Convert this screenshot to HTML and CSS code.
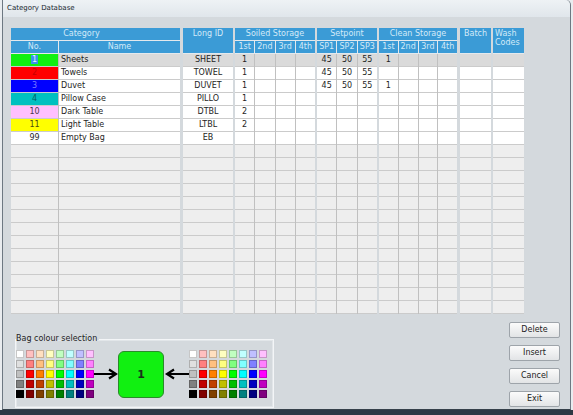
FILE: index.html
```html
<!DOCTYPE html>
<html>
<head>
<meta charset="utf-8">
<link rel="stylesheet" href="styles.css">
</head>
<body>
<div class="window">
  <div class="titlebar">Category Database</div>
  <div class="content">
    <div class="grid">
      <div class="grp w-cat">
        <div class="gh off">Category</div>
        <div class="shr"><div class="sh no">No.</div><div class="sh">Name</div></div>
        <div class="body">
          <div class="col no c">
            <div class="cell sw1"><span class="sel">1</span></div>
            <div class="cell sw2">2</div>
            <div class="cell sw3">3</div>
            <div class="cell sw4">4</div>
            <div class="cell sw10">10</div>
            <div class="cell sw11">11</div>
            <div class="cell sw99">99</div>
            <div class="fill"></div>
          </div>
          <div class="col l">
            <div class="cell">Sheets</div>
            <div class="cell">Towels</div>
            <div class="cell">Duvet</div>
            <div class="cell">Pillow Case</div>
            <div class="cell">Dark Table</div>
            <div class="cell">Light Table</div>
            <div class="cell">Empty Bag</div>
            <div class="fill"></div>
          </div>
        </div>
      </div>

      <div class="grp w-id">
        <div class="gh tall">Long ID</div>
        <div class="body">
          <div class="col c">
            <div class="cell">SHEET</div>
            <div class="cell">TOWEL</div>
            <div class="cell">DUVET</div>
            <div class="cell">PILLO</div>
            <div class="cell">DTBL</div>
            <div class="cell">LTBL</div>
            <div class="cell">EB</div>
            <div class="fill"></div>
          </div>
        </div>
      </div>

      <div class="grp w-soil">
        <div class="gh">Soiled Storage</div>
        <div class="shr"><div class="sh">1st</div><div class="sh">2nd</div><div class="sh">3rd</div><div class="sh">4th</div></div>
        <div class="body">
          <div class="col c">
            <div class="cell">1</div><div class="cell">1</div><div class="cell">1</div><div class="cell">1</div><div class="cell">2</div><div class="cell">2</div><div class="cell"></div>
            <div class="fill"></div>
          </div>
          <div class="col c">
            <div class="cell"></div><div class="cell"></div><div class="cell"></div><div class="cell"></div><div class="cell"></div><div class="cell"></div><div class="cell"></div>
            <div class="fill"></div>
          </div>
          <div class="col c">
            <div class="cell"></div><div class="cell"></div><div class="cell"></div><div class="cell"></div><div class="cell"></div><div class="cell"></div><div class="cell"></div>
            <div class="fill"></div>
          </div>
          <div class="col c">
            <div class="cell"></div><div class="cell"></div><div class="cell"></div><div class="cell"></div><div class="cell"></div><div class="cell"></div><div class="cell"></div>
            <div class="fill"></div>
          </div>
        </div>
      </div>

      <div class="grp w-sp">
        <div class="gh">Setpoint</div>
        <div class="shr"><div class="sh">SP1</div><div class="sh">SP2</div><div class="sh">SP3</div></div>
        <div class="body">
          <div class="col c">
            <div class="cell">45</div><div class="cell">45</div><div class="cell">45</div><div class="cell"></div><div class="cell"></div><div class="cell"></div><div class="cell"></div>
            <div class="fill"></div>
          </div>
          <div class="col c">
            <div class="cell">50</div><div class="cell">50</div><div class="cell">50</div><div class="cell"></div><div class="cell"></div><div class="cell"></div><div class="cell"></div>
            <div class="fill"></div>
          </div>
          <div class="col c">
            <div class="cell">55</div><div class="cell">55</div><div class="cell">55</div><div class="cell"></div><div class="cell"></div><div class="cell"></div><div class="cell"></div>
            <div class="fill"></div>
          </div>
        </div>
      </div>

      <div class="grp w-cl">
        <div class="gh">Clean Storage</div>
        <div class="shr"><div class="sh">1st</div><div class="sh">2nd</div><div class="sh">3rd</div><div class="sh">4th</div></div>
        <div class="body">
          <div class="col c">
            <div class="cell">1</div><div class="cell"></div><div class="cell">1</div><div class="cell"></div><div class="cell"></div><div class="cell"></div><div class="cell"></div>
            <div class="fill"></div>
          </div>
          <div class="col c">
            <div class="cell"></div><div class="cell"></div><div class="cell"></div><div class="cell"></div><div class="cell"></div><div class="cell"></div><div class="cell"></div>
            <div class="fill"></div>
          </div>
          <div class="col c">
            <div class="cell"></div><div class="cell"></div><div class="cell"></div><div class="cell"></div><div class="cell"></div><div class="cell"></div><div class="cell"></div>
            <div class="fill"></div>
          </div>
          <div class="col c">
            <div class="cell"></div><div class="cell"></div><div class="cell"></div><div class="cell"></div><div class="cell"></div><div class="cell"></div><div class="cell"></div>
            <div class="fill"></div>
          </div>
        </div>
      </div>

      <div class="grp w-batch">
        <div class="gh tall">Batch</div>
        <div class="body">
          <div class="col c">
            <div class="cell"></div><div class="cell"></div><div class="cell"></div><div class="cell"></div><div class="cell"></div><div class="cell"></div><div class="cell"></div>
            <div class="fill"></div>
          </div>
        </div>
      </div>

      <div class="grp w-wash">
        <div class="gh tall wash">Wash<br>Codes</div>
        <div class="body">
          <div class="col c">
            <div class="cell"></div><div class="cell"></div><div class="cell"></div><div class="cell"></div><div class="cell"></div><div class="cell"></div><div class="cell"></div>
            <div class="fill"></div>
          </div>
        </div>
      </div>
    </div>

    <div class="bottom">
      <fieldset class="groupbox">
        <legend>Bag colour selection</legend>
        <div class="gb-inner">
          <div class="pal">
            <i></i><i></i><i></i><i></i><i></i><i></i><i></i><i></i>
            <i></i><i></i><i></i><i></i><i></i><i></i><i></i><i></i>
            <i></i><i></i><i></i><i></i><i></i><i></i><i></i><i></i>
            <i></i><i></i><i></i><i></i><i></i><i></i><i></i><i></i>
            <i></i><i></i><i></i><i></i><i></i><i></i><i></i><i></i>
          </div>
          <svg class="arrow a1" width="24" height="12" viewBox="0 0 24 12">
            <path d="M0 6H21" stroke="#000" stroke-width="2" fill="none"/>
            <path d="M15 1.5L22 6L15 10.5" stroke="#000" stroke-width="2.2" fill="none"/>
          </svg>
          <div class="bag">1</div>
          <svg class="arrow a2" width="25" height="12" viewBox="0 0 25 12">
            <path d="M25 6H4" stroke="#000" stroke-width="2" fill="none"/>
            <path d="M10 1.5L3 6L10 10.5" stroke="#000" stroke-width="2.2" fill="none"/>
          </svg>
          <div class="pal">
            <i></i><i></i><i></i><i></i><i></i><i></i><i></i><i></i>
            <i></i><i></i><i></i><i></i><i></i><i></i><i></i><i></i>
            <i></i><i></i><i></i><i></i><i></i><i></i><i></i><i></i>
            <i></i><i></i><i></i><i></i><i></i><i></i><i></i><i></i>
            <i></i><i></i><i></i><i></i><i></i><i></i><i></i><i></i>
          </div>
        </div>
      </fieldset>
      <div class="buttons">
        <button class="btn">Delete</button>
        <button class="btn">Insert</button>
        <button class="btn">Cancel</button>
        <button class="btn">Exit</button>
      </div>
    </div>
  </div>
</div>
</body>
</html>
```

FILE: styles.css
```css
* { box-sizing: border-box; margin: 0; padding: 0; }
html, body { width: 573px; height: 415px; overflow: hidden; }
body {
  background: linear-gradient(to bottom, #e9ecef 0, #e9ecef 410px, #2d3843 410px);
  font-family: "DejaVu Sans", sans-serif;
  font-size: 8px;
  color: #1e1e1e;
}
.window {
  margin-left: 2px;
  width: 569px;
  height: 410px;
  background: #d4d9dd;
  border-left: 1px solid #6d7882;
  border-right: 1px solid #6d7882;
  border-bottom: 1px solid #36414b;
  border-top-right-radius: 5px;
  display: flex;
  flex-direction: column;
}
.titlebar {
  height: 17px;
  line-height: 17px;
  padding-left: 4px;
  font-size: 7px;
  color: #202830;
  background: linear-gradient(#eef2f5, #e0e6eb);
  border-top-right-radius: 5px;
}
.content {
  flex: 1;
  padding: 11px 10px 0 8px;
  display: flex;
  flex-direction: column;
}
.grid { display: flex; gap: 2px; height: 286px; }
.grp { display: flex; flex-direction: column; gap: 1px; background: #e4e9ed; }
.w-cat { width: 169px; }
.w-id { width: 50px; margin-left: 1px; }
.w-soil { width: 80px; }
.w-sp { width: 60px; }
.w-cl { width: 78px; }
.w-batch { width: 31px; margin-left: 1px; }
.w-wash { width: 31px; }

.gh {
  height: 12px;
  line-height: 12px;
  background: #3b9bd6;
  color: #d3eaf8;
  text-align: center;
  white-space: nowrap;
}
.gh.tall { height: 25px; }
.gh.off { padding-right: 28px; }
.gh.wash { text-align: left; padding: 1px 0 0 2px; line-height: 9px; }
.shr { display: flex; gap: 1px; height: 12px; }
.sh {
  flex: 1;
  background: #3b9bd6;
  color: #d3eaf8;
  text-align: center;
  line-height: 12px;
  white-space: nowrap;
  overflow: hidden;
}
.no { flex: 0 0 47px; }
.body { display: flex; gap: 1px; height: 260px; background: #c0c0c0; }
.col {
  flex: 1;
  min-width: 0;
  display: flex;
  flex-direction: column;
  gap: 1px;
  background: #cbcbcb;
}
.col.no { flex: 0 0 47px; }
.c { text-align: center; }
.l .cell { padding-left: 2px; }
.cell {
  height: 12px;
  line-height: 12px;
  background: #ffffff;
  white-space: nowrap;
  overflow: hidden;
}
.cell:first-child { background: #dadada; }
.fill {
  flex: 1;
  background: repeating-linear-gradient(to bottom, #eeeeee 0, #eeeeee 12px, #cbcbcb 12px, #cbcbcb 13px);
}
.col .sw1 { background: #11f011; }
.col .sw2 { background: #ff0000; color: #c80000; }
.col .sw3 { background: #0000ff; color: #7a7aff; }
.col .sw4 { background: #00c0c0; color: #006262; }
.col .sw10 { background: #ffc0ff; color: #4a3a4a; }
.col .sw11 { background: #ffff00; color: #4a4a10; }
.col .sw99 { background: #ffffff; color: #2a2a2a; }
.sel { background: #3a94ea; color: #e8f2ff; padding: 0 1px; }

.bottom {
  display: flex;
  justify-content: space-between;
  align-items: flex-start;
}
.groupbox {
  margin: 20px 0 0 4px;
  border: 1px solid #f3f5f7;
  box-shadow: inset 0 0 0 1px #e2e6e9;
  padding: 6px 6px 9px 0;
}
.groupbox legend {
  line-height: 10px;
  font-size: 8px;
  padding: 0 2px 0 0;
  color: #1e1e1e;
}
.gb-inner { display: flex; align-items: center; }
.pal {
  display: grid;
  grid-template-columns: repeat(8, 8px);
  grid-auto-rows: 8px;
  gap: 2px;
}
.pal i { display: block; box-shadow: inset 0 0 0 1px rgba(0,0,0,0.22); }
.pal i:nth-child(1) { background: #ffffff; }
.pal i:nth-child(2) { background: #ffc0c0; }
.pal i:nth-child(3) { background: #ffe0c0; }
.pal i:nth-child(4) { background: #ffffc0; }
.pal i:nth-child(5) { background: #c0ffc0; }
.pal i:nth-child(6) { background: #c0ffff; }
.pal i:nth-child(7) { background: #c0c0ff; }
.pal i:nth-child(8) { background: #ffc0ff; }
.pal i:nth-child(9) { background: #e0e0e0; }
.pal i:nth-child(10) { background: #ff8080; }
.pal i:nth-child(11) { background: #ffc080; }
.pal i:nth-child(12) { background: #ffff80; }
.pal i:nth-child(13) { background: #80ff80; }
.pal i:nth-child(14) { background: #80ffff; }
.pal i:nth-child(15) { background: #8080ff; }
.pal i:nth-child(16) { background: #ff80ff; }
.pal i:nth-child(17) { background: #c0c0c0; }
.pal i:nth-child(18) { background: #ff0000; }
.pal i:nth-child(19) { background: #ff8000; }
.pal i:nth-child(20) { background: #ffff00; }
.pal i:nth-child(21) { background: #00ff00; }
.pal i:nth-child(22) { background: #00ffff; }
.pal i:nth-child(23) { background: #0000ff; }
.pal i:nth-child(24) { background: #ff00ff; }
.pal i:nth-child(25) { background: #808080; }
.pal i:nth-child(26) { background: #c00000; }
.pal i:nth-child(27) { background: #c04000; }
.pal i:nth-child(28) { background: #c0c000; }
.pal i:nth-child(29) { background: #00c000; }
.pal i:nth-child(30) { background: #00c0c0; }
.pal i:nth-child(31) { background: #0000c0; }
.pal i:nth-child(32) { background: #c000c0; }
.pal i:nth-child(33) { background: #000000; }
.pal i:nth-child(34) { background: #800000; }
.pal i:nth-child(35) { background: #804000; }
.pal i:nth-child(36) { background: #808000; }
.pal i:nth-child(37) { background: #008000; }
.pal i:nth-child(38) { background: #008080; }
.pal i:nth-child(39) { background: #000080; }
.pal i:nth-child(40) { background: #800080; }
.arrow { display: block; }
.bag {
  width: 46px;
  height: 47px;
  background: #11f011;
  border: 1px solid #2a8a2a;
  border-radius: 6px;
  display: flex;
  align-items: center;
  justify-content: center;
  font-weight: bold;
  font-size: 11px;
  color: #1a2e1a;
}
.buttons {
  display: flex;
  flex-direction: column;
  gap: 7px;
  margin-top: 8px;
}
.btn {
  width: 51px;
  height: 16px;
  font-family: "DejaVu Sans", sans-serif;
  font-size: 8px;
  color: #222;
  border: 1px solid #9ea4aa;
  border-radius: 2px;
  background: linear-gradient(#fbfbfb, #e2e4e6);
  padding: 0;
  line-height: 14px;
  text-align: center;
}
```
